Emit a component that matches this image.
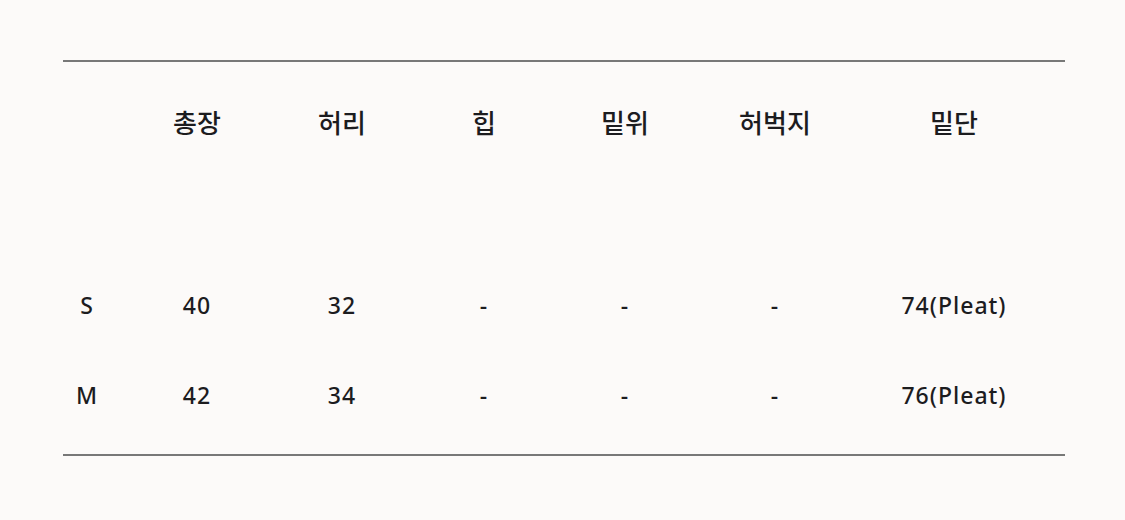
const COLS = 'grid grid-cols-[48px_172px_118px_166px_116px_184px_174px]';

const HEAD = ['', '총장', '허리', '힙', '밑위', '허벅지', '밑단'];
const ROWS = [
  ['S', '40', '32', '-', '-', '-', '74(Pleat)'],
  ['M', '42', '34', '-', '-', '-', '76(Pleat)'],
];

export default function App() {
  return (
    <div className="w-[1125px] h-[520px] bg-[#fcfaf9] pt-[60px] pl-[63px] font-['Noto_Sans','Noto_Sans_CJK_KR',sans-serif] text-[#1c1c1f]">
      <div className="w-[1002px]">
        <div className="h-[2px] bg-[#787878]" />
        {/* header */}
        <div className={`${COLS} h-[124px] pb-[4px] items-center text-[26px]`}>
          {HEAD.map((h, i) => (
            <div key={i} className="text-center font-['Noto_Sans_CJK_KR',sans-serif] font-medium leading-none">{h}</div>
          ))}
        </div>
        <div className="h-[74px]" />
        {ROWS.map((r) => (
          <div key={r[0]} className={`${COLS} h-[90px] items-center text-[23px] tracking-[1px] font-medium`}>
            {r.map((c, i) => (
              <div key={i} className="text-center leading-none">{c}</div>
            ))}
          </div>
        ))}
        <div className="mt-[14px] h-[2px] bg-[#787878]" />
      </div>
    </div>
  );
}
